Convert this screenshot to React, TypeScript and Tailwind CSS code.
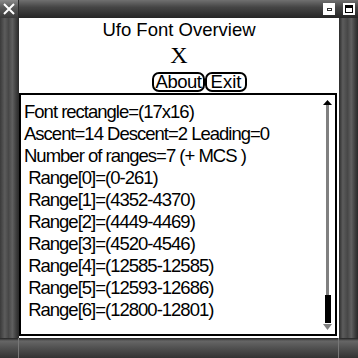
const lines = [
  "Font rectangle=(17x16)",
  "Ascent=14 Descent=2 Leading=0",
  "Number of ranges=7 (+ MCS )",
  " Range[0]=(0-261)",
  " Range[1]=(4352-4370)",
  " Range[2]=(4449-4469)",
  " Range[3]=(4520-4546)",
  " Range[4]=(12585-12585)",
  " Range[5]=(12593-12686)",
  " Range[6]=(12800-12801)",
];

function CloseIcon() {
  return (
    <svg width="12" height="12" viewBox="0 0 12 12">
      <path d="M1 1 L11 11 M11 1 L1 11" stroke="#fff" strokeWidth="2" />
    </svg>
  );
}

function ScrollBar() {
  return (
    <div className="w-[9px] mr-[3px] pt-[5px] pb-[4px] flex flex-col items-center">
      <svg width="9" height="5" viewBox="0 0 9 5" className="shrink-0">
        <path d="M4.5 0 L9 5 L0 5 Z" fill="#000" />
      </svg>
      <div className="flex-1 w-[3px] bg-[#808080]" />
      <div className="h-[28px] w-[6px] bg-black shrink-0" />
      <svg width="9" height="6" viewBox="0 0 9 6" className="shrink-0 mt-[1px]">
        <path d="M0 0 L9 0 L4.5 6 Z" fill="#808080" />
      </svg>
    </div>
  );
}

export default function App() {
  return (
    <div className="w-[358px] h-[358px] flex flex-col bg-[#3c3c3c] overflow-hidden font-['Liberation_Sans',Arial,sans-serif]">
      {/* Title bar */}
      <div className="h-[18px] flex items-stretch bg-[linear-gradient(to_bottom,#707070,#454545_40%,#262626)]">
        <div className="w-[19px] flex items-center justify-center bg-[linear-gradient(to_bottom,#8a8a8a,#5a5a5a_40%,#3a3a3a)] border-r border-[#2a2a2a]">
          <CloseIcon />
        </div>
        <div className="flex-1" />
        <div className="flex items-center gap-[8px] pr-[3px]">
          <div className="w-[12px] h-[12px] bg-white flex items-center justify-center">
            <div className="w-[5px] h-[3px] border border-[#333]" />
          </div>
          <div className="w-[12px] h-[12px] border-2 border-white bg-white">
            <div className="w-full h-full border border-black border-t-[3px]" />
          </div>
        </div>
      </div>

      <div className="flex h-[320px]">
        {/* Left frame */}
        <div className="w-[19px] bg-[linear-gradient(to_right,#3a3a3a,#5c5c5c_25%,#474747_45%,#606060_65%,#3e3e3e_85%,#2a2a2a)]" />

        {/* Form */}
        <div className="w-[320px] bg-white text-black flex flex-col text-[18.5px]">
          <div className="pt-[1px] leading-[22px] text-center">Ufo Font Overview</div>
          <div className="mt-[2px] leading-[24px] text-center text-[24px] font-['Liberation_Serif',serif]">X</div>
          <div className="mt-[5px] pl-[133px] flex">
            <div className="w-[53px] h-[20px] border-2 border-black rounded-[7px] flex items-center justify-center leading-[16px] tracking-[-0.5px]">
              About
            </div>
            <div className="w-[42px] h-[20px] border-2 border-black rounded-[7px] flex items-center justify-center leading-[16px]">
              Exit
            </div>
          </div>
          <div className="mt-[1px] w-[318px] h-[243px] border-2 border-black flex">
            <div className="flex-1 pt-[6px] pl-[3px] leading-[22px] tracking-[-1px] whitespace-pre">
              {lines.map((l) => (
                <div key={l}>{l}</div>
              ))}
            </div>
            <ScrollBar />
          </div>
        </div>

        {/* Right frame */}
        <div className="w-[19px] bg-[linear-gradient(to_right,#2a2a2a,#5c5c5c_20%,#474747_45%,#606060_65%,#3e3e3e_85%,#2a2a2a)]" />
      </div>

      {/* Bottom frame */}
      <div className="flex-1 flex bg-[linear-gradient(to_bottom,#222,#666_15%,#505050_50%,#333)]">
        <div className="w-[19px] border-r border-[#777]" />
        <div className="w-[320px] border-r border-[#777]" />
      </div>
    </div>
  );
}
